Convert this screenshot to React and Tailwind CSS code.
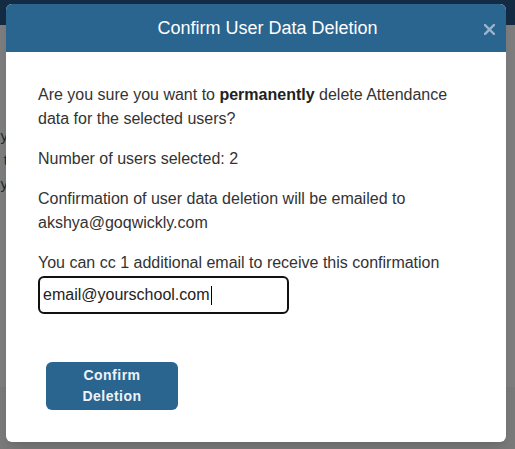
import React from 'react'

// Delete-confirmation dialog sitting over a dimmed page.
export default function App() {
  return (
    <div className="relative w-[515px] h-[449px] overflow-hidden bg-[#7f7f7f]" style={{ fontFamily: '"Liberation Sans", Arial, sans-serif' }}>
      {/* dimmed page behind the backdrop */}
      <div className="flex flex-col h-full">
        <div className="h-[25px] bg-[#132c44]" />
        <div className="relative h-[362px] bg-[#7e7e7e]">
          <div className="absolute left-0 top-[99px] w-[7px] overflow-hidden text-right text-[15px] leading-[24px] text-[#1b2a38]">
            <div className="-mr-[1px]">y</div>
            <div className="-mr-[1px]">t</div>
            <div className="-mr-[1px]">y</div>
          </div>
        </div>
        <div className="flex-1 bg-[#7a7a7a]" />
      </div>

      {/* modal */}
      <div className="absolute left-[6px] top-[4px] w-[500px] rounded-[6px] bg-white shadow-lg">
        <div className="relative flex h-[48px] items-center justify-center rounded-t-[6px] bg-[#2a6590]">
          <h3 className="pl-[23px] text-[18px] text-white">Confirm User Data Deletion</h3>
          <button className="absolute right-[11px] top-[19px] flex h-[12px] w-[12px] items-center justify-center">
            <svg width="11" height="11" viewBox="0 0 11 11">
              <path d="M1 1 L10 10 M10 1 L1 10" stroke="#9db4c8" strokeWidth="2.4" strokeLinecap="square" />
            </svg>
          </button>
        </div>

        <div className="px-[32px] pt-[31px] pb-[32px] text-[16px] leading-[24px] text-[#333]">
          <p className="mb-[16px]">
            Are you sure you want to <b className="text-[#222]">permanently</b> delete Attendance data for the selected users?
          </p>
          <p className="mb-[16px]">Number of users selected: 2</p>
          <p className="mb-[16px]">Confirmation of user data deletion will be emailed to akshya@goqwickly.com</p>
          <p>You can cc 1 additional email to receive this confirmation</p>
          <div className="mt-[1px] flex h-[38px] w-[251px] items-center rounded-[6px] border-2 border-[#111] pl-[3px] text-[#222]">
            <span>email@yourschool.com</span>
            <span className="ml-[1px] inline-block h-[19px] w-[1px] bg-black" />
          </div>
          <button className="mt-[48px] ml-[8px] flex h-[48px] w-[132px] items-center justify-center rounded-[6px] bg-[#2a6590] text-[14px] font-bold leading-[21px] tracking-[0.5px] text-[#eef3f8]">
            Confirm<br />Deletion
          </button>
        </div>
      </div>
    </div>
  )
}
